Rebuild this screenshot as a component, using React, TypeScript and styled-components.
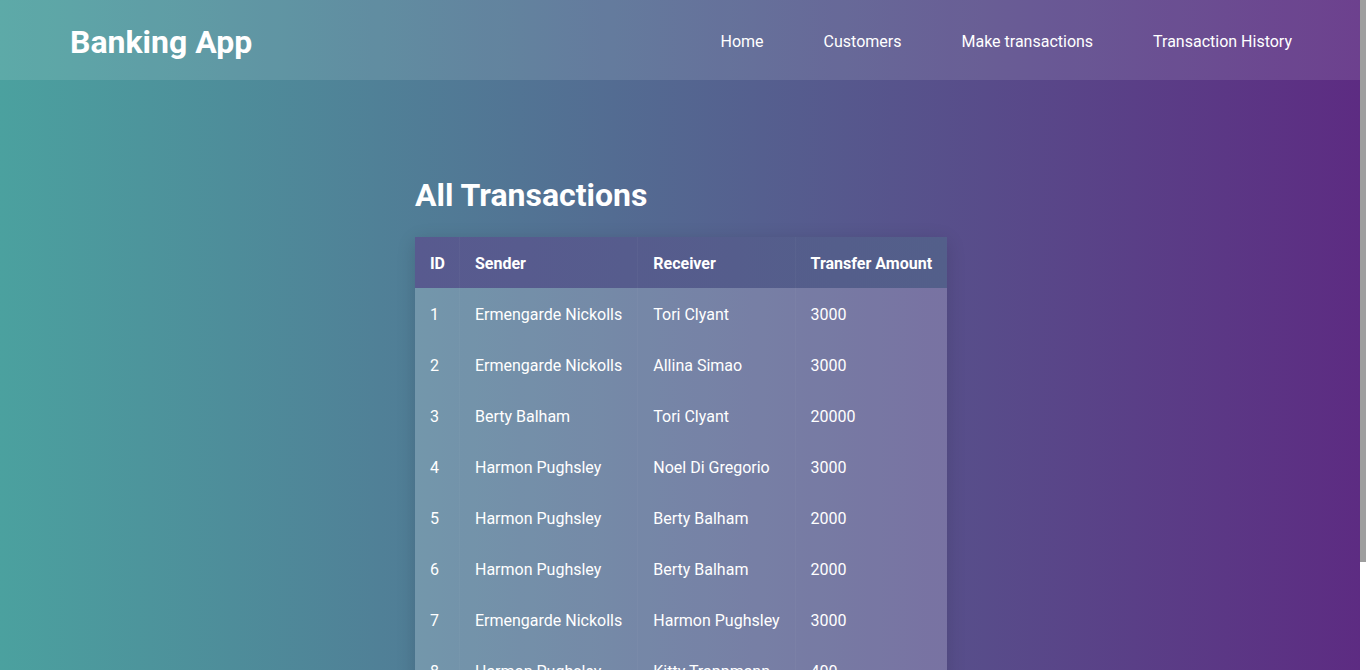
import React from "react";
import styled, { createGlobalStyle } from "styled-components";

const GlobalStyle = createGlobalStyle`
  html, body {
    margin: 0;
    padding: 0;
    height: 100%;
    overflow: hidden;
  }
  body {
    font-family: Roboto, "Noto Sans", sans-serif;
    color: #ffffff;
  }
`;

const Frame = styled.div`
  display: flex;
  height: 100vh;
  background: linear-gradient(to right, #4ba19f 0%, #5d2b82 100%);
`;

const Page = styled.div`
  flex: 1;
  min-width: 0;
  overflow-y: auto;
  &::-webkit-scrollbar {
    display: none;
  }
`;

const ScrollRail = styled.div`
  width: 6px;
  flex-shrink: 0;
  background: #ffffff;
`;

const ScrollThumb = styled.div`
  height: 562px;
  background: #9e9e9e;
`;

const NavBar = styled.header`
  height: 80px;
  padding: 0 68px 0 70px;
  display: flex;
  align-items: center;
  justify-content: space-between;
  background: rgba(255, 255, 255, 0.1);
`;

const Brand = styled.div`
  font-size: 32px;
  font-weight: 700;
  line-height: 38px;
  padding-top: 4px;
`;

const NavLinks = styled.nav`
  display: flex;
  align-items: center;
  gap: 60px;
  padding-top: 2px;
`;

const NavLink = styled.a`
  font-size: 16px;
  color: #ffffff;
  text-decoration: none;
  cursor: pointer;
`;

const Main = styled.main`
  width: fit-content;
  margin: 0 auto;
  padding: 96px 0 51px 2px;
`;

const Title = styled.h1`
  margin: 0 0 23px;
  font-size: 32px;
  line-height: 38px;
  font-weight: 700;
`;

const Table = styled.table`
  border-collapse: collapse;
  border-spacing: 0;
  box-shadow: 0 4px 18px rgba(0, 0, 0, 0.14);
`;

const HeadRow = styled.tr`
  background: linear-gradient(to right, #585a8f, #535f8a);
`;

const BodyRow = styled.tr`
  background: rgba(255, 255, 255, 0.2);
`;

const HeadCell = styled.th`
  padding: 17px 15px 15px;
  line-height: 19px;
  font-size: 16px;
  font-weight: 700;
  text-align: left;
  white-space: nowrap;
  border-left: 1px solid rgba(255, 255, 255, 0.03);
  &:first-child {
    border-left: none;
    padding-right: 14px;
  }
`;

const Cell = styled.td`
  padding: 17px 15px 15px;
  line-height: 19px;
  font-size: 16px;
  font-weight: 400;
  white-space: nowrap;
  border-left: 1px solid rgba(255, 255, 255, 0.03);
  &:first-child {
    border-left: none;
    padding-right: 14px;
  }
`;

const transactions = [
  { id: 1, sender: "Ermengarde Nickolls", receiver: "Tori Clyant", amount: 3000 },
  { id: 2, sender: "Ermengarde Nickolls", receiver: "Allina Simao", amount: 3000 },
  { id: 3, sender: "Berty Balham", receiver: "Tori Clyant", amount: 20000 },
  { id: 4, sender: "Harmon Pughsley", receiver: "Noel Di Gregorio", amount: 3000 },
  { id: 5, sender: "Harmon Pughsley", receiver: "Berty Balham", amount: 2000 },
  { id: 6, sender: "Harmon Pughsley", receiver: "Berty Balham", amount: 2000 },
  { id: 7, sender: "Ermengarde Nickolls", receiver: "Harmon Pughsley", amount: 3000 },
  { id: 8, sender: "Harmon Pughsley", receiver: "Kitty Trappmann", amount: 400 },
  { id: 9, sender: "Kitty Trappmann", receiver: "Noel Di Gregorio", amount: 2500 },
];

export default function App() {
  return (
    <>
      <GlobalStyle />
      <Frame>
        <Page>
          <NavBar>
            <Brand>Banking App</Brand>
            <NavLinks>
              <NavLink>Home</NavLink>
              <NavLink>Customers</NavLink>
              <NavLink>Make transactions</NavLink>
              <NavLink>Transaction History</NavLink>
            </NavLinks>
          </NavBar>
          <Main>
            <Title>All Transactions</Title>
            <Table>
              <thead>
                <HeadRow>
                  <HeadCell>ID</HeadCell>
                  <HeadCell>Sender</HeadCell>
                  <HeadCell>Receiver</HeadCell>
                  <HeadCell>Transfer Amount</HeadCell>
                </HeadRow>
              </thead>
              <tbody>
                {transactions.map((t) => (
                  <BodyRow key={t.id}>
                    <Cell>{t.id}</Cell>
                    <Cell>{t.sender}</Cell>
                    <Cell>{t.receiver}</Cell>
                    <Cell>{t.amount}</Cell>
                  </BodyRow>
                ))}
              </tbody>
            </Table>
          </Main>
        </Page>
        <ScrollRail>
          <ScrollThumb />
        </ScrollRail>
      </Frame>
    </>
  );
}
